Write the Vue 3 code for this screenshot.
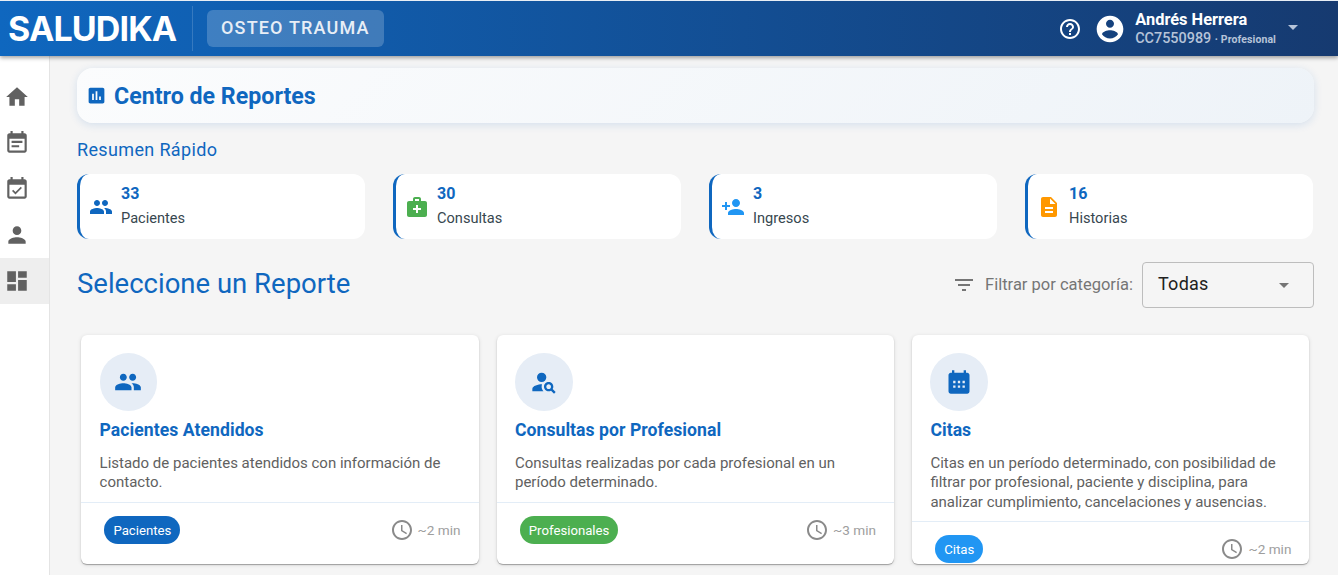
<script setup>
const icons = {
  home: 'M10 20v-6h4v6h5v-8h3L12 3 2 12h3v8z',
  eventNote: 'M17 10H7v2h10v-2zm2-7h-1V1h-2v2H8V1H6v2H5c-1.11 0-1.99.9-1.99 2L3 19c0 1.1.89 2 2 2h14c1.1 0 2-.9 2-2V5c0-1.1-.9-2-2-2zm0 16H5V8h14v11zm-5-5H7v2h7v-2z',
  eventAvailable: 'M16.53 11.06L15.47 10l-4.88 4.88-2.12-2.12-1.06 1.06L10.59 17l5.94-5.94zM19 3h-1V1h-2v2H8V1H6v2H5c-1.11 0-1.99.9-1.99 2L3 19c0 1.1.89 2 2 2h14c1.1 0 2-.9 2-2V5c0-1.1-.9-2-2-2zm0 16H5V8h14v11z',
  person: 'M12 12c2.21 0 4-1.79 4-4s-1.79-4-4-4-4 1.79-4 4 1.79 4 4 4zm0 2c-2.67 0-8 1.34-8 4v2h16v-2c0-2.66-5.33-4-8-4z',
  dashboard: 'M3 13h8V3H3v10zm0 8h8v-6H3v6zm10 0h8V11h-8v10zm0-18v6h8V3h-8z',
  assessment: 'M19 3H5c-1.1 0-2 .9-2 2v14c0 1.1.9 2 2 2h14c1.1 0 2-.9 2-2V5c0-1.1-.9-2-2-2zM9 17H7v-7h2v7zm4 0h-2V7h2v10zm4 0h-2v-4h2v4z',
  help: 'M11 18h2v-2h-2v2zm1-16C6.48 2 2 6.48 2 12s4.48 10 10 10 10-4.48 10-10S17.52 2 12 2zm0 18c-4.41 0-8-3.59-8-8s3.59-8 8-8 8 3.59 8 8-3.59 8-8 8zm0-14c-2.21 0-4 1.79-4 4h2c0-1.1.9-2 2-2s2 .9 2 2c0 2-3 1.75-3 5h2c0-2.25 3-2.5 3-5 0-2.21-1.79-4-4-4z',
  account: 'M12 2C6.48 2 2 6.48 2 12s4.48 10 10 10 10-4.48 10-10S17.52 2 12 2zm0 3c1.66 0 3 1.34 3 3s-1.34 3-3 3-3-1.34-3-3 1.34-3 3-3zm0 14.2c-2.5 0-4.71-1.28-6-3.22.03-1.99 4-3.08 6-3.08 1.99 0 5.97 1.09 6 3.08-1.29 1.94-3.5 3.22-6 3.22z',
  people: 'M16 11c1.66 0 2.99-1.34 2.99-3S17.66 5 16 5c-1.66 0-3 1.34-3 3s1.34 3 3 3zm-8 0c1.66 0 2.99-1.34 2.99-3S9.66 5 8 5C6.34 5 5 6.34 5 8s1.34 3 3 3zm0 2c-2.33 0-7 1.17-7 3.5V19h14v-2.5c0-2.33-4.67-3.5-7-3.5zm8 0c-.29 0-.62.02-.97.05 1.16.84 1.97 1.97 1.97 3.45V19h6v-2.5c0-2.33-4.67-3.5-7-3.5z',
  medical: 'M20 6h-4V4c0-1.1-.9-2-2-2h-4c-1.1 0-2 .9-2 2v2H4c-1.1 0-2 .9-2 2v12c0 1.1.9 2 2 2h16c1.1 0 2-.9 2-2V8c0-1.1-.9-2-2-2zM10 4h4v2h-4V4zm6 11h-3v3h-2v-3H8v-2h3v-3h2v3h3v2z',
  personAdd: 'M15 12c2.21 0 4-1.79 4-4s-1.79-4-4-4-4 1.79-4 4 1.79 4 4 4zm-9-2V7H4v3H1v2h3v3h2v-3h3v-2H6zm9 4c-2.67 0-8 1.34-8 4v2h16v-2c0-2.66-5.33-4-8-4z',
  description: 'M14 2H6c-1.1 0-1.99.9-1.99 2L4 20c0 1.1.89 2 1.99 2H18c1.1 0 2-.9 2-2V8l-6-6zm2 16H8v-2h8v2zm0-4H8v-2h8v2zm-3-5V3.5L18.5 9H13z',
  filter: 'M10 18h4v-2h-4v2zM3 6v2h18V6H3zm3 7h12v-2H6v2z',
  personSearch: 'M6 8a4 4 0 1 0 8 0a4 4 0 1 0-8 0M10.35 14.01C7.62 13.91 2 15.27 2 18v2h9.54c-2.47-2.76-1.23-5.89-1.19-5.99zM19.43 18.02c.36-.59.57-1.28.57-2.02 0-2.21-1.79-4-4-4s-4 1.79-4 4 1.79 4 4 4c.74 0 1.43-.22 2.02-.57L20.59 22 22 20.59l-2.57-2.57zM16 18c-1.1 0-2-.9-2-2s.9-2 2-2 2 .9 2 2-.9 2-2 2z',
  // relleno, los puntos son huecos (evenodd)
  calendar: 'M19 4h-1V2h-2v2H8V2H6v2H5c-1.1 0-2 .9-2 2v14c0 1.1.9 2 2 2h14c1.1 0 2-.9 2-2V6c0-1.1-.9-2-2-2zM7 11h2v2H7zm4 0h2v2h-2zm4 0h2v2h-2zM7 15h2v2H7zm4 0h2v2h-2zm4 0h2v2h-2z',
  clock: 'M11.99 2C6.47 2 2 6.48 2 12s4.47 10 9.99 10C17.52 22 22 17.52 22 12S17.52 2 11.99 2zM12 20c-4.42 0-8-3.58-8-8s3.58-8 8-8 8 3.58 8 8-3.58 8-8 8zM12.5 7H11v6l5.25 3.15.75-1.23-4.5-2.67z',
}

const navItems = [
  { icon: icons.home },
  { icon: icons.eventNote },
  { icon: icons.eventAvailable },
  { icon: icons.person },
  { icon: icons.dashboard, active: true },
]

const stats = [
  { value: 33, label: 'Pacientes', icon: icons.people, color: '#0f67bf' },
  { value: 30, label: 'Consultas', icon: icons.medical, color: '#4caf50' },
  { value: 3, label: 'Ingresos', icon: icons.personAdd, color: '#2196f3' },
  { value: 16, label: 'Historias', icon: icons.description, color: '#ff9800' },
]

const reports = [
  {
    title: 'Pacientes Atendidos',
    text: 'Listado de pacientes atendidos con información de contacto.',
    tag: 'Pacientes',
    tagColor: '#0f67bf',
    time: '~2 min',
    icon: icons.people,
  },
  {
    title: 'Consultas por Profesional',
    text: 'Consultas realizadas por cada profesional en un período determinado.',
    tag: 'Profesionales',
    tagColor: '#4caf50',
    time: '~3 min',
    icon: icons.personSearch,
  },
  {
    title: 'Citas',
    text: 'Citas en un período determinado, con posibilidad de filtrar por profesional, paciente y disciplina, para analizar cumplimiento, cancelaciones y ausencias.',
    tag: 'Citas',
    tagColor: '#2196f3',
    time: '~2 min',
    icon: icons.calendar,
  },
]
</script>

<template>
  <div class="app">
    <header class="topbar">
      <div class="brand">SALUDIKA</div>
      <div class="brand-sep" />
      <div class="unit">OSTEO TRAUMA</div>
      <div class="spacer" />
      <svg class="help" viewBox="0 0 24 24"><path :d="icons.help" /></svg>
      <svg class="avatar" viewBox="0 0 24 24"><path :d="icons.account" /></svg>
      <div class="user">
        <div class="user-name">Andrés Herrera</div>
        <div class="user-id">CC7550989 <span class="user-role">· Profesional</span></div>
      </div>
      <span class="caret" />
    </header>

    <div class="body">
      <nav class="sidebar">
        <div v-for="(n, i) in navItems" :key="i" class="nav-item" :class="{ active: n.active }">
          <svg viewBox="0 0 24 24"><path :d="n.icon" /></svg>
        </div>
      </nav>

      <main class="main">
        <div class="page-title">
          <svg viewBox="0 0 24 24"><path :d="icons.assessment" /></svg>
          <h1>Centro de Reportes</h1>
        </div>

        <h3 class="quick">Resumen Rápido</h3>
        <div class="stats">
          <div v-for="s in stats" :key="s.label" class="stat">
            <svg viewBox="0 0 24 24" :style="{ fill: s.color }"><path :d="s.icon" /></svg>
            <div>
              <div class="stat-value">{{ s.value }}</div>
              <div class="stat-label">{{ s.label }}</div>
            </div>
          </div>
        </div>

        <div class="select-row">
          <h2>Seleccione un Reporte</h2>
          <div class="filter">
            <svg viewBox="0 0 24 24"><path :d="icons.filter" /></svg>
            <span class="filter-label">Filtrar por categoría:</span>
            <div class="select">
              <span class="select-value">Todas</span>
              <span class="select-caret" />
            </div>
          </div>
        </div>

        <div class="cards">
          <article v-for="r in reports" :key="r.title" class="card">
            <div class="card-body">
              <div class="card-icon">
                <svg viewBox="0 0 24 24"><path :d="r.icon" fill-rule="evenodd" /></svg>
              </div>
              <h4>{{ r.title }}</h4>
              <p>{{ r.text }}</p>
            </div>
            <div class="card-foot">
              <span class="tag" :style="{ background: r.tagColor }">{{ r.tag }}</span>
              <span class="time">
                <svg viewBox="0 0 24 24"><path :d="icons.clock" /></svg>
                {{ r.time }}
              </span>
            </div>
          </article>
        </div>
      </main>
    </div>
  </div>
</template>

<style>
html,
body {
  margin: 0;
  overflow: hidden;
}
</style>

<style scoped>
.app {
  height: 575px;
  overflow: hidden;
  background: #f5f5f5;
  font-family: Roboto, "Liberation Sans", sans-serif;
}
.topbar {
  position: relative;
  z-index: 2;
  display: flex;
  align-items: center;
  box-sizing: border-box;
  height: 56px;
  border-top: 1px solid #e8eef5;
  padding: 0 40px 0 8px;
  background: linear-gradient(90deg, #0f67bf 0%, #163a70 100%);
  box-shadow: 0 2px 4px rgba(0, 0, 0, 0.35);
  color: #fff;
}
.brand {
  width: 169px;
  font-family: Inter, sans-serif;
  font-size: 34px;
  font-weight: 700;
  letter-spacing: -0.86px;
  line-height: 1;
  white-space: nowrap;
}
.brand-sep {
  width: 1px;
  height: 45px;
  margin-left: 15px;
  background: rgba(255, 255, 255, 0.16);
}
.unit {
  margin-left: 14px;
  padding: 0 14px;
  height: 37px;
  line-height: 36px;
  border-radius: 6px;
  background: rgba(255, 255, 255, 0.2);
  font-size: 18px;
  font-weight: 500;
  letter-spacing: 1.17px;
  color: #e8eef6;
}
.spacer {
  flex: 1;
}
.help {
  width: 24px;
  height: 24px;
  fill: #fff;
}
.avatar {
  width: 32px;
  height: 32px;
  margin-left: 12px;
  fill: #fff;
}
.user {
  margin-left: 9px;
  line-height: 1.2;
}
.user-name {
  font-size: 16.4px;
  font-weight: 700;
  white-space: nowrap;
}
.user-id {
  font-size: 14.4px;
  font-weight: 500;
  color: #b6c4d9;
  white-space: nowrap;
}
.user-role {
  font-size: 10.5px;
  font-weight: 700;
  letter-spacing: 0.1px;
}
.caret {
  width: 0;
  height: 0;
  margin-left: 12px;
  margin-bottom: 2px;
  border-left: 5px solid transparent;
  border-right: 5px solid transparent;
  border-top: 5px solid #b6c4d9;
}
.body {
  display: flex;
}
.sidebar {
  flex: none;
  box-sizing: border-box;
  width: 50px;
  height: 519px;
  padding-top: 18px;
  background: #fff;
  border-right: 1px solid #e4e4e4;
}
.nav-item {
  display: flex;
  align-items: center;
  height: 46px;
  padding-left: 4px;
}
.nav-item svg {
  width: 26px;
  height: 26px;
  fill: #616161;
}
.nav-item.active {
  background: #eeeeee;
}
.main {
  flex: 1;
  min-width: 0;
  padding: 12px 24px 0 27px;
}
.page-title {
  display: flex;
  align-items: center;
  gap: 7px;
  height: 55px;
  padding-left: 9px;
  border-radius: 16px;
  background: linear-gradient(135deg, #fbfcfd, #eef3f8);
  box-shadow: 0 2px 8px rgba(21, 101, 192, 0.14);
}
.page-title svg {
  width: 21px;
  height: 21px;
  fill: #0f67bf;
}
.page-title h1 {
  margin: 0;
  font-size: 23.2px;
  font-weight: 700;
  color: #0f67bf;
}
.quick {
  margin: 15px 0 0;
  font-size: 18px;
  line-height: 24px;
  font-weight: 400;
  letter-spacing: 0.35px;
  color: #0f67bf;
}
.stats {
  display: grid;
  grid-template-columns: repeat(4, 1fr);
  gap: 28px;
  margin-top: 12px;
  margin-right: 1px;
}
.stat {
  display: flex;
  align-items: center;
  gap: 8px;
  box-sizing: border-box;
  height: 65px;
  padding-left: 9px;
  border-left: 3px solid #0f67bf;
  border-radius: 12px;
  background: #fff;
}
.stat svg {
  flex: none;
  width: 24px;
  height: 24px;
}
.stat-value {
  margin-top: -2px;
  font-size: 16px;
  font-weight: 700;
  line-height: 22px;
  color: #0f67bf;
}
.stat-label {
  margin-top: 3px;
  font-size: 14.6px;
  line-height: 20px;
  color: #37474f;
}
.select-row {
  display: flex;
  align-items: center;
  justify-content: space-between;
  margin-top: 23px;
}
.select-row h2 {
  margin: 0 0 4px;
  font-size: 27.5px;
  font-weight: 400;
  color: #0f67bf;
}
.filter {
  display: flex;
  align-items: center;
  font-size: 16.5px;
  color: #757575;
}
.filter svg {
  width: 24px;
  height: 24px;
  margin-right: 9px;
  fill: #757575;
}
.filter-label {
  margin-bottom: 2px;
}
.select {
  display: flex;
  align-items: center;
  justify-content: space-between;
  box-sizing: border-box;
  width: 172px;
  height: 46px;
  margin-left: 9px;
  padding: 0 24px 0 15px;
  border: 1px solid #bdbdbd;
  border-radius: 4px;
  font-size: 18px;
  letter-spacing: 0.25px;
  color: #212121;
}
.select-value {
  margin-bottom: 3px;
}
.select-caret {
  width: 0;
  height: 0;
  border-left: 5.5px solid transparent;
  border-right: 5.5px solid transparent;
  border-top: 5px solid #757575;
}
.cards {
  display: grid;
  grid-template-columns: repeat(3, 1fr);
  gap: 18.2px;
  margin: 27px 4.6px 0 4.4px;
}
.card {
  display: flex;
  flex-direction: column;
  height: 229px;
  overflow: hidden;
  border-radius: 6px;
  background: #fff;
  box-shadow: 0 1px 1px rgba(0, 0, 0, 0.3), 0 1px 4px rgba(0, 0, 0, 0.12);
}
.card-body {
  padding: 18px 18.2px 9px;
}
.card-icon {
  display: flex;
  align-items: center;
  justify-content: center;
  width: 57.6px;
  height: 57.6px;
  border-radius: 50%;
  background: #e6edf6;
}
.card-icon svg {
  width: 28px;
  height: 28px;
  fill: #0f67bf;
}
.card h4 {
  margin: 7px 0 0;
  font-size: 17.6px;
  line-height: 24px;
  font-weight: 700;
  letter-spacing: 0.05px;
  color: #0f67bf;
}
.card p {
  margin: 12px 0 0;
  font-size: 15px;
  line-height: 19.5px;
  color: #616161;
}
.card-foot {
  flex: none;
  display: flex;
  align-items: center;
  justify-content: space-between;
  padding: 13px 18px 0 23px;
  border-top: 1px solid #e3edf7;
}
.tag {
  height: 28px;
  padding: 0 9px;
  border-radius: 14px;
  font-size: 13.2px;
  line-height: 29px;
  color: #fff;
}
.time {
  display: flex;
  align-items: center;
  gap: 4px;
  font-size: 13.6px;
  color: #9e9e9e;
}
.time svg {
  width: 24px;
  height: 24px;
  fill: #8a8a8a;
}
</style>
